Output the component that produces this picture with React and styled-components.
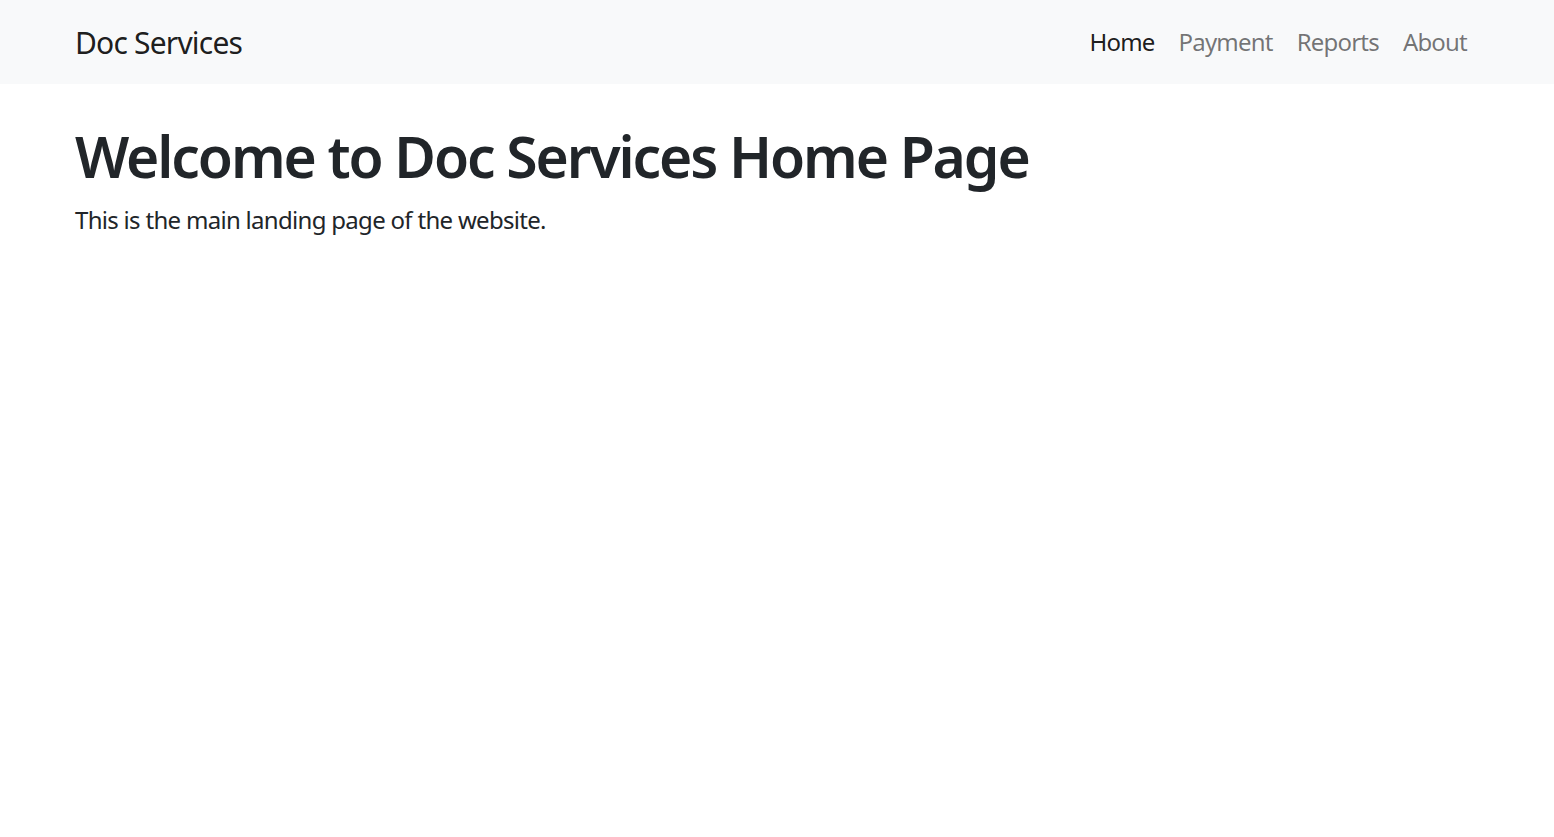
import React from "react";
import styled, { createGlobalStyle } from "styled-components";

const Global = createGlobalStyle`
  * { box-sizing: border-box; }
  html, body { margin: 0; padding: 0; }
  body {
    font-family: "Noto Sans", "Open Sans", sans-serif;
    font-size: 24px;
    line-height: 1.5;
    color: #212529;
    background: #fff;
    letter-spacing: -0.7px;
  }
`;

const Navbar = styled.nav`
  background: #f8f9fa;
  padding: 12px 0;
`;

const Container = styled.div`
  max-width: 1440px;
  margin: 0 auto;
  padding: 0 18px;
  display: ${(p) => (p.$flex ? "flex" : "block")};
  align-items: center;
  justify-content: space-between;
  margin-top: ${(p) => p.$top || 0}px;
`;

const Brand = styled.a`
  font-size: 30px;
  line-height: 45px;
  padding: 7.5px 0;
  letter-spacing: -0.8px;
  color: rgba(0, 0, 0, 0.9);
  text-decoration: none;
`;

const NavList = styled.ul`
  display: flex;
  list-style: none;
  margin: 0;
  padding: 0;
`;

const NavLink = styled.a`
  display: block;
  padding: 12px 12px;
  line-height: 36px;
  font-size: 24px;
  letter-spacing: -0.8px;
  text-decoration: none;
  color: ${(p) => (p.$active ? "rgba(0,0,0,0.9)" : "rgba(0,0,0,0.55)")};
`;

const Title = styled.h1`
  font-size: 57px;
  font-weight: 600;
  line-height: 72px;
  letter-spacing: -2.1px;
  margin: 0 0 10px;
`;

const Lead = styled.p`
  margin: 0 0 24px;
`;

export default function App() {
  const links = ["Home", "Payment", "Reports", "About"];
  return (
    <>
      <Global />
      <Navbar>
        <Container $flex>
          <Brand href="#">Doc Services</Brand>
          <NavList>
            {links.map((l, i) => (
              <li key={l}>
                <NavLink href="#" $active={i === 0}>{l}</NavLink>
              </li>
            ))}
          </NavList>
        </Container>
      </Navbar>
      <Container $top={36}>
        <Title>Welcome to Doc Services Home Page</Title>
        <Lead>This is the main landing page of the website.</Lead>
      </Container>
    </>
  );
}
